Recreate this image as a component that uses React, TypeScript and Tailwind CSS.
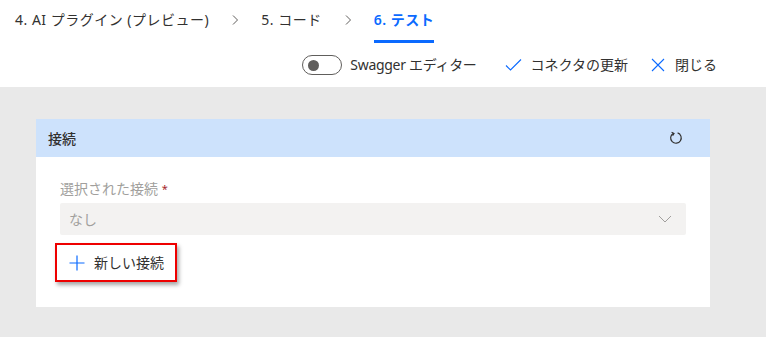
import React from 'react';

const font = { fontFamily: '"Noto Sans", "Noto Sans CJK JP", sans-serif' };

function Chevron() {
	return (
		<svg width="12" height="12" viewBox="0 0 12 12" className="text-[#605e5c]">
			<path d="M4 1.5 L8.5 6 L4 10.5" fill="none" stroke="currentColor" strokeWidth="1" />
		</svg>
	);
}

export default function App() {
	return (
		<div className="w-[766px] h-[337px] bg-white flex flex-col text-[14px] text-[#323130] overflow-hidden" style={font}>
			{/* breadcrumb tabs */}
			<div className="h-[43px] flex items-stretch pl-[15px] tracking-[0.5px]">
				<div className="flex items-center pb-[3px] leading-none">4. AI プラグイン (プレビュー)</div>
				<div className="flex items-center mx-[20px] pb-[3px]"><Chevron /></div>
				<div className="flex items-center pb-[3px] leading-none">5. コード</div>
				<div className="flex items-center mx-[20px] pb-[3px]"><Chevron /></div>
				<div className="flex items-center border-b-[3px] border-[#0b6aff] text-[#0b6aff] font-semibold leading-none">6. テスト</div>
			</div>

			{/* command bar */}
			<div className="h-[44px] flex items-center justify-end pr-[49px]">
				<div className="w-[40px] h-[20px] rounded-full border border-[#605e5c] flex items-center pl-[5px]">
					<div className="w-[11px] h-[11px] rounded-full bg-[#605e5c]" />
				</div>
				<span className="ml-[8px] leading-none tracking-[-0.3px]">Swagger エディター</span>
				<svg width="17" height="14" viewBox="0 0 17 14" className="ml-[28px] text-[#0b6aff]">
					<path d="M1 7.5 L5.5 12 L16 1.5" fill="none" stroke="currentColor" strokeWidth="1.1" />
				</svg>
				<span className="ml-[9px] leading-none">コネクタの更新</span>
				<svg width="14" height="14" viewBox="0 0 14 14" className="ml-[23px] text-[#0b6aff]">
					<path d="M1 1 L13 13 M13 1 L1 13" fill="none" stroke="currentColor" strokeWidth="1.1" />
				</svg>
				<span className="ml-[10px] leading-none">閉じる</span>
			</div>

			{/* content */}
			<div className="flex-1 bg-[#e9e9e9] pt-[32px] pl-[36px]">
				<div className="w-[674px] bg-white">
					<div className="h-[38px] bg-[#cde2fc] flex items-center justify-between pl-[12px] pr-[27px]">
						<span className="font-medium">接続</span>
						<svg width="14" height="14" viewBox="0 0 14 14" className="text-[#323130]">
							<path d="M4.2 2.4 A5.3 5.3 0 1 0 8.6 1.9" fill="none" stroke="currentColor" strokeWidth="1.2" />
							<path d="M2.6 1.2 L5 2.4 L3.6 4.6" fill="none" stroke="currentColor" strokeWidth="1.2" />
						</svg>
					</div>
					<div className="px-[24px] pt-[23px] pb-[25px]">
						<div className="text-[#a19f9d] leading-[18px] h-[18px]">
							選択された接続 <span className="text-[#a4262c] text-[11px] align-top">*</span>
						</div>
						<div className="mt-[5px] h-[32px] bg-[#f3f2f1] rounded-[2px] flex items-center justify-between pl-[9px] pr-[14px] text-[#a19f9d]">
							<span>なし</span>
							<svg width="14" height="10" viewBox="0 0 14 10" className="text-[#a19f9d]">
								<path d="M1 2 L7 8 L13 2" fill="none" stroke="currentColor" strokeWidth="1" />
							</svg>
						</div>
						<div className="mt-[8px] -ml-[5px] w-[122px] h-[39px] border-2 border-[#ee0000] shadow-[2px_3px_4px_rgba(0,0,0,0.35)] flex items-center pl-[12px]">
							<svg width="16" height="16" viewBox="0 0 16 16" className="text-[#0b6aff]">
								<path d="M8 0.5 V15.5 M0.5 8 H15.5" fill="none" stroke="currentColor" strokeWidth="1.2" />
							</svg>
							<span className="ml-[9px] leading-none">新しい接続</span>
						</div>
					</div>
				</div>
			</div>
		</div>
	);
}
